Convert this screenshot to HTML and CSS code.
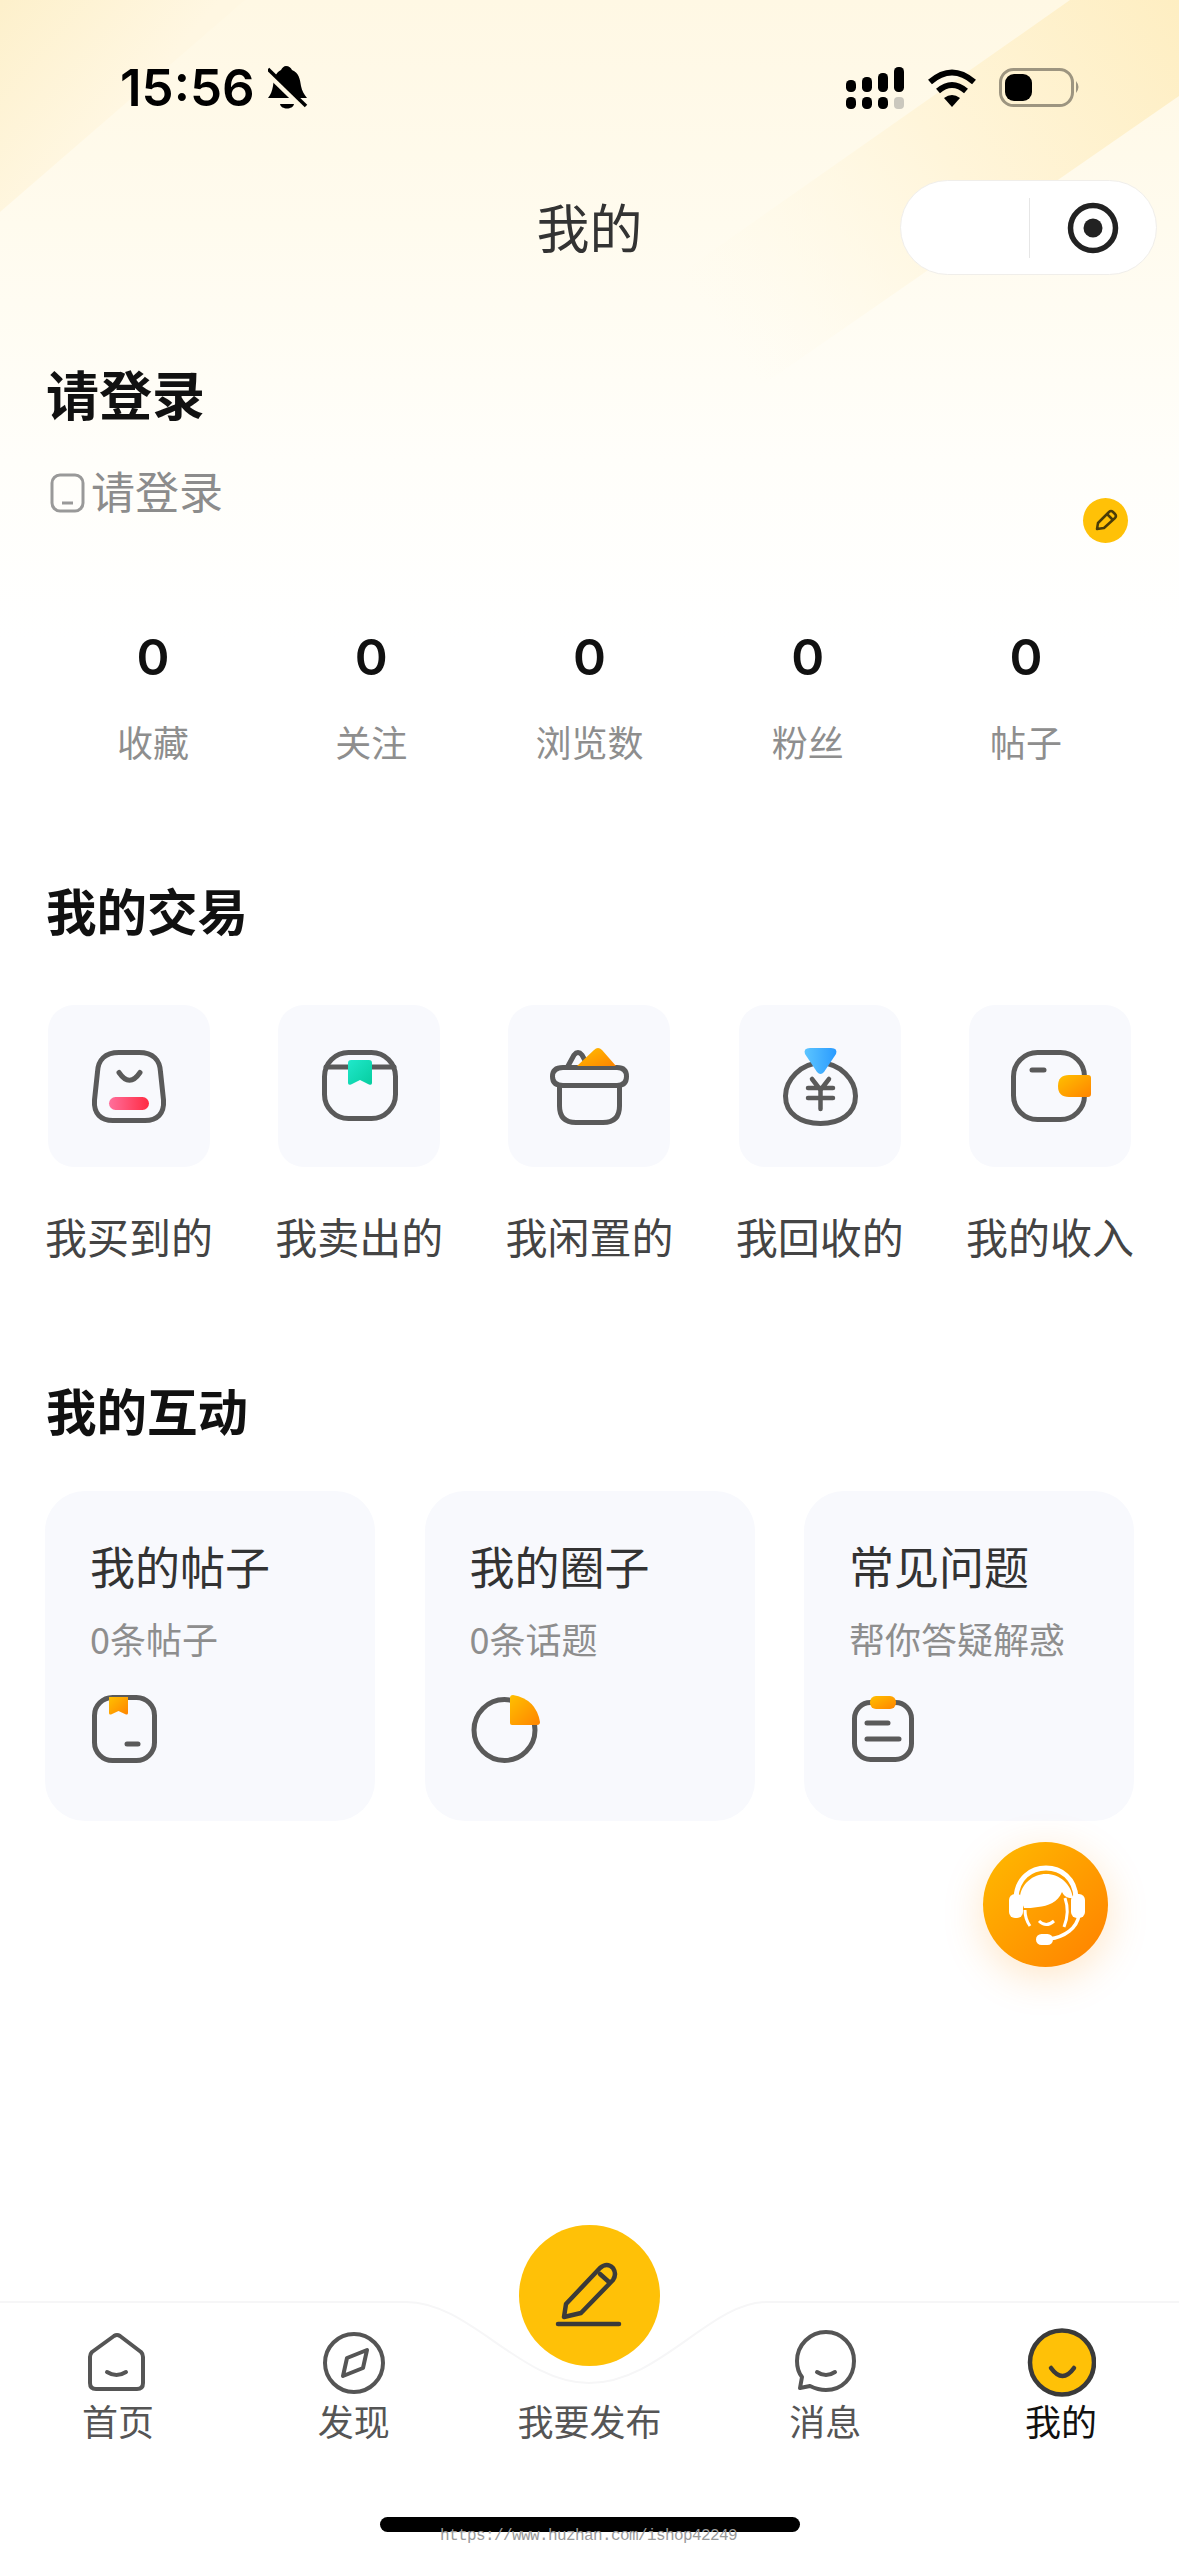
FILE: index.html
```html
<!DOCTYPE html>
<html lang="zh-CN">
<head>
<meta charset="UTF-8">
<meta name="viewport" content="width=device-width, initial-scale=1.0">
<title>我的</title>
<link rel="stylesheet" href="styles.css">
</head>
<body>

<!-- shared gradients for the icons -->
<svg class="defs" width="0" height="0">
  <defs>
    <linearGradient id="orange" x1="0" y1="0" x2="1" y2="1">
      <stop offset="0" stop-color="#ffc000"/>
      <stop offset="1" stop-color="#ff8400"/>
    </linearGradient>
    <linearGradient id="pink" x1="0" y1="0" x2="1" y2="0">
      <stop offset="0" stop-color="#ff6f9c"/>
      <stop offset="1" stop-color="#ff2b43"/>
    </linearGradient>
    <linearGradient id="teal" x1="0" y1="0" x2="1" y2="1">
      <stop offset="0" stop-color="#20e8cb"/>
      <stop offset="1" stop-color="#06cd9f"/>
    </linearGradient>
    <linearGradient id="blue" x1="0" y1="0" x2="1" y2="0">
      <stop offset="0" stop-color="#5cc5ff"/>
      <stop offset="1" stop-color="#2a9bff"/>
    </linearGradient>
    <linearGradient id="bgBase" x1="0" y1="0" x2="0" y2="1">
      <stop offset="0" stop-color="#fff8e4"/>
      <stop offset="0.35" stop-color="#fffbee"/>
      <stop offset="0.72" stop-color="#fffefa"/>
      <stop offset="1" stop-color="#ffffff"/>
    </linearGradient>
    <linearGradient id="bgLeft" gradientUnits="userSpaceOnUse" x1="0" y1="0" x2="125" y2="110">
      <stop offset="0" stop-color="#fdf0cb"/>
      <stop offset="1" stop-color="#fff7e2"/>
    </linearGradient>
    <linearGradient id="bgRight" gradientUnits="userSpaceOnUse" x1="1179" y1="0" x2="720" y2="330">
      <stop offset="0" stop-color="#feeec2"/>
      <stop offset="0.5" stop-color="#fff5da"/>
      <stop offset="1" stop-color="#fffaea" stop-opacity="0"/>
    </linearGradient>
  </defs>
</svg>

<div class="page">

  <svg class="page-bg" viewBox="0 0 1179 640" width="1179" height="640">
    <rect width="1179" height="640" fill="url(#bgBase)"/>
    <polygon points="0,0 245,0 0,212" fill="url(#bgLeft)"/>
    <polygon points="1070,0 1179,0 1179,96 640,470 400,470" fill="url(#bgRight)"/>
  </svg>

  <div class="status-bar">
    <div class="status-left">
      <span class="time">15:56</span>
      <svg width="40" height="44" viewBox="0 0 40 44">
        <path d="M18 0 C21 0 23 2 24 4 C31 7 32 13 33 20 C34 25 36 28 39 32 L0 32 C3 28 4 25 5 20 C6 13 7 7 13 4 C14 2 16 0 18 0Z" fill="#000"/>
        <path d="M12 38 H26 C25 44 13 44 12 38Z" fill="#000"/>
        <path d="M-1 7 L37 44" stroke="#fff8e4" stroke-width="5"/>
        <path d="M0 3 L38 40" stroke="#000" stroke-width="3.5"/>
      </svg>
    </div>
    <div class="status-right">
      <svg width="58" height="42" viewBox="0 0 58 42">
        <rect x="0" y="13" width="10" height="12" rx="4.5"/>
        <rect x="16" y="10" width="10" height="15" rx="4.5"/>
        <rect x="32" y="6" width="10" height="19" rx="4.5"/>
        <rect x="48" y="0" width="10" height="25" rx="4.5"/>
        <rect x="0" y="30" width="10" height="12" rx="4.5"/>
        <rect x="16" y="30" width="10" height="12" rx="4.5"/>
        <rect x="32" y="30" width="10" height="12" rx="4.5"/>
        <rect x="48" y="30" width="10" height="12" rx="4" fill="#cbc8be"/>
      </svg>
      <svg width="50" height="38" viewBox="0 0 50 38" fill="none" stroke="#000" stroke-width="6">
        <path d="M3 13 Q25 -6 47 13"/>
        <path d="M11 22 Q25 10 39 22"/>
        <path d="M17 29 Q25 23 33 29 L25 38Z" fill="#000" stroke="none"/>
      </svg>
      <svg width="82" height="40" viewBox="0 0 82 40">
        <rect x="1.5" y="1.5" width="72" height="36" rx="13" fill="none" stroke="#9d9580" stroke-width="3"/>
        <rect x="6" y="6" width="27" height="27" rx="9" fill="#000"/>
        <path d="M77 13 Q82 19 77 25Z" fill="#9d9580"/>
      </svg>
    </div>
  </div>

  <div class="nav">
    <span></span>
    <div class="nav-title">我的</div>
    <div class="capsule">
      <div class="capsule-left"></div>
      <div class="capsule-line"></div>
      <div class="capsule-right">
        <svg width="54" height="54" viewBox="0 0 54 54">
          <circle cx="27" cy="27" r="22.5" fill="none" stroke="#222" stroke-width="5.5"/>
          <circle cx="27" cy="27" r="9.5" fill="#222"/>
        </svg>
      </div>
    </div>
  </div>

  <div class="profile">
    <div>
      <div class="profile-name">请登录</div>
      <div class="profile-sub">
        <svg width="35" height="40" viewBox="0 0 35 40" fill="none" stroke="#999" stroke-width="3">
          <rect x="2" y="2" width="31" height="36" rx="8"/>
          <path d="M12 30 H23"/>
        </svg>
        <span>请登录</span>
      </div>
    </div>
    <div class="edit-badge">
      <svg width="45" height="45" viewBox="0 0 45 45" fill="none" stroke="#4a3c08" stroke-width="2.5" stroke-linejoin="round">
        <path d="M14 31 L15 25 L26 14 Q28 12 30 14 L32 16 Q34 18 32 20 L21 30 Z"/>
        <path d="M24 16 L30 22"/>
      </svg>
    </div>
  </div>

  <div class="stats">
    <div class="stat"><div class="stat-num">0</div><div class="stat-label">收藏</div></div>
    <div class="stat"><div class="stat-num">0</div><div class="stat-label">关注</div></div>
    <div class="stat"><div class="stat-num">0</div><div class="stat-label">浏览数</div></div>
    <div class="stat"><div class="stat-num">0</div><div class="stat-label">粉丝</div></div>
    <div class="stat"><div class="stat-num">0</div><div class="stat-label">帖子</div></div>
  </div>

  <h2 class="section-title trade-title">我的交易</h2>
  <div class="trade">
    <div class="trade-item">
      <div class="tile">
        <svg class="line-icon" width="80" height="80" viewBox="0 0 80 80">
          <path d="M30 6.5 H50 C64 6.5 71 14 71.5 26 L74.5 54 C75.5 68 68 74.5 56 74.5 H24 C12 74.5 4.5 68 5.5 54 L8.5 26 C9 14 16 6.5 30 6.5Z"/>
          <path d="M30 26.5 Q40.5 42 51 26.5"/>
          <rect x="20" y="51" width="40" height="13" rx="6.5" fill="url(#pink)" stroke="none"/>
        </svg>
      </div>
      <div class="trade-label">我买到的</div>
    </div>
    <div class="trade-item">
      <div class="tile">
        <svg class="line-icon" width="80" height="80" viewBox="0 0 80 80">
          <rect x="5.5" y="6.5" width="71" height="66" rx="24"/>
          <path d="M7 21 H75"/>
          <path d="M29 17 Q29 14 32 14 H50 Q53 14 53 17 V37 Q53 39.5 50 38.5 L41 34 L32 38.5 Q29 39.5 29 37Z" fill="url(#teal)" stroke="none"/>
        </svg>
      </div>
      <div class="trade-label">我卖出的</div>
    </div>
    <div class="trade-item">
      <div class="tile">
        <svg class="line-icon" width="80" height="80" viewBox="0 0 80 80">
          <path d="M19 20 L25 9 Q29 4 33 9 L38 18"/>
          <path d="M14 21.5 H68 Q77.5 21.5 77.5 30.5 Q77.5 39.5 68 39.5 H14 Q3.5 39.5 3.5 30.5 Q3.5 21.5 14 21.5Z"/>
          <path d="M10.5 40 V60 Q10.5 76.5 27 76.5 H54 Q70.5 76.5 70.5 60 V40"/>
          <path d="M28 20 L45 4 Q49 0 53 4 L67 20Z" fill="url(#orange)" stroke="none"/>
        </svg>
      </div>
      <div class="trade-label">我闲置的</div>
    </div>
    <div class="trade-item">
      <div class="tile">
        <svg class="line-icon" width="80" height="80" viewBox="0 0 80 80">
          <path d="M40.5 17 C60 17 75.500 34 75.500 50 C75.500 68 60 77.500 40.500 77.500 C21 77.500 5.500 68 5.500 50 C5.500 34 21 17 40.500 17Z"/>
          <path d="M32 33 L40.5 44 L49 33 M28 42 H53 M28 52 H53 M40.5 44 V63" stroke-width="4.5"/>
          <path d="M30 2 H51 Q58 2 56 8 L44 26 Q40.5 30 37 26 L25 8 Q23 2 30 2Z" fill="url(#blue)" stroke="none"/>
        </svg>
      </div>
      <div class="trade-label">我回收的</div>
    </div>
    <div class="trade-item">
      <div class="tile">
        <svg class="line-icon" width="80" height="80" viewBox="0 0 80 80">
          <rect x="3.5" y="6.5" width="71" height="67" rx="24"/>
          <path d="M22 24 H34"/>
          <path d="M59 29 H78 Q81 29 81 32 V48 Q81 51 78 51 H59 Q48 51 48 40 Q48 29 59 29Z" fill="url(#orange)" stroke="none"/>
        </svg>
      </div>
      <div class="trade-label">我的收入</div>
    </div>
  </div>

  <h2 class="section-title action-title">我的互动</h2>
  <div class="cards">
    <div class="card">
      <div class="card-title">我的帖子</div>
      <div class="card-sub">0条帖子</div>
      <svg class="line-icon card-icon" width="70" height="70" viewBox="0 0 70 70">
        <rect x="3.5" y="3.5" width="60" height="63" rx="18"/>
        <path d="M36 50 H47"/>
        <path d="M18 3 H37 V19 Q37 21 35 20.500 L27.500 17 L20 20.500 Q18 21 18 19Z" fill="url(#orange)" stroke="none"/>
      </svg>
    </div>
    <div class="card">
      <div class="card-title">我的圈子</div>
      <div class="card-sub">0条话题</div>
      <svg class="line-icon card-icon" width="70" height="70" viewBox="0 0 70 70">
        <circle cx="33.500" cy="36" r="30.500"/>
        <path d="M39 4 Q39 1 42 1 Q65 5 69 28 Q69 31 66 31 H41 Q39 31 39 29Z" fill="url(#orange)" stroke="none"/>
      </svg>
    </div>
    <div class="card">
      <div class="card-title">常见问题</div>
      <div class="card-sub">帮你答疑解惑</div>
      <svg class="line-icon card-icon" width="70" height="70" viewBox="0 0 70 70">
        <rect x="4.500" y="8.500" width="57" height="57" rx="16"/>
        <path d="M17 29 H38 M17 45 H49"/>
        <rect x="20" y="2" width="26" height="13" rx="6" fill="url(#orange)" stroke="none"/>
      </svg>
    </div>
  </div>

  <div class="service">
    <svg width="125" height="125" viewBox="0 0 125 125">
      <path d="M33 56 C34 36 48 26 63 26 C78 26 92 36 93 56" fill="none" stroke="#fff" stroke-width="5"/>
      <rect x="26" y="52" width="14" height="24" rx="6" fill="#fff"/>
      <rect x="88" y="52" width="14" height="24" rx="6" fill="#fff"/>
      <path d="M37 55 C38 42 50 32 63 32 C77 32 88 42 90 56 C86 56 82 56 79 50 C75 60 65 64 55 65 C50 66 45 66 41 66 Z" fill="#fff"/>
      <path d="M42 68 Q42 77 47 84 M82 56 Q87 70 81 85" fill="none" stroke="#fff" stroke-width="3"/>
      <path d="M56 79 Q63 86 71 79" fill="none" stroke="#fff" stroke-width="3"/>
      <path d="M96 73 C94 86 82 95 66 97" fill="none" stroke="#fff" stroke-width="3.500"/>
      <rect x="53" y="92" width="17" height="11" rx="5.500" fill="#fff"/>
    </svg>
  </div>

  <div class="tabbar">
    <svg class="tabbar-edge" width="1179" height="90" viewBox="0 0 1179 90">
      <path d="M0 1 H406 C470 1 520 82 589 82 C660 82 710 1 767 1 H1179" fill="none" stroke="#f6f6f7" stroke-width="2"/>
    </svg>
    <div class="publish">
      <svg width="141" height="141" viewBox="0 0 141 141" fill="none" stroke="#3a3a3a" stroke-width="4.500" stroke-linejoin="round" stroke-linecap="round">
        <path d="M45 92 L47 79 L81 43 Q88 37 94 43 Q98 49 94 55 L62 88 Z"/>
        <path d="M81 49 L90 57"/>
        <path d="M39 99 H100"/>
      </svg>
    </div>
    <div class="tabs">
      <div class="tab">
        <svg class="tab-icon" width="70" height="70" viewBox="0 0 70 70">
          <path d="M31 8 Q34 6 37 8 L58 24 Q60 26 60 29 V55 Q60 61 54 61 H13 Q7 61 7 55 V29 Q7 26 9 24 Z"/>
          <path d="M24 44 Q33.500 50 43 44"/>
        </svg>
        <div class="tab-label">首页</div>
      </div>
      <div class="tab">
        <svg class="tab-icon" width="70" height="70" viewBox="0 0 70 70">
          <circle cx="35" cy="35" r="29"/>
          <path d="M48 22 L44 40 L24 48 L28 30 Z"/>
        </svg>
        <div class="tab-label">发现</div>
      </div>
      <div class="tab">
        <div class="tab-spacer"></div>
        <div class="tab-label">我要发布</div>
      </div>
      <div class="tab">
        <svg class="tab-icon" width="70" height="70" viewBox="0 0 70 70">
          <path d="M36 4 C52 4 64 17 64 33 C64 50 52 62 36 62 C30 62 24 60 20 58 L10 60 L12 49 C8 44 7 38 7 33 C7 17 20 4 36 4Z"/>
          <path d="M27 44 Q36 50 45 44"/>
        </svg>
        <div class="tab-label">消息</div>
      </div>
      <div class="tab active">
        <svg class="tab-icon" width="70" height="70" viewBox="0 0 70 70">
          <ellipse cx="36" cy="34.500" rx="32" ry="32" fill="#ffc107"/>
          <path d="M25 40 Q36.500 56 48 40"/>
        </svg>
        <div class="tab-label">我的</div>
      </div>
    </div>
    <div class="home-bar"></div>
    <div class="watermark">https://www.huzhan.com/ishop42249</div>
  </div>

</div>

</body>
</html>
```

FILE: styles.css
```css
* {
  box-sizing: border-box;
}

body {
  margin: 0;
  background: #fff;
  font-family: "Noto Sans CJK SC", "Noto Sans", sans-serif;
  color: #333;
  overflow: hidden;
}

.defs {
  position: absolute;
}

.page {
  position: relative;
  isolation: isolate;
  width: 1179px;
  height: 2556px;
  display: flex;
  flex-direction: column;
  overflow: hidden;
}

.page-bg {
  position: absolute;
  top: 0;
  left: 0;
  z-index: -1;
}

/* status bar */
.status-bar {
  display: flex;
  justify-content: space-between;
  align-items: center;
  height: 48px;
  margin-top: 64px;
  padding: 0 98px 0 120px;
}

.status-left {
  display: flex;
  align-items: center;
  gap: 13px;
}

.time {
  font-family: Inter, sans-serif;
  font-size: 51px;
  font-weight: 600;
  line-height: 48px;
  color: #000;
}

.status-right {
  display: flex;
  align-items: center;
  gap: 22.5px;
}

/* nav */
.nav {
  display: grid;
  grid-template-columns: 1fr auto 1fr;
  align-items: center;
  height: 95px;
  margin-top: 68px;
}

.nav-title {
  padding-bottom: 4px;
  font-size: 53px;
  line-height: 70px;
  color: #333;
}

.capsule {
  justify-self: end;
  display: flex;
  align-items: center;
  width: 257px;
  height: 95px;
  margin-right: 22px;
  background: #fff;
  border: 1px solid #f0eeea;
  border-radius: 48px;
}

.capsule-left {
  width: 128px;
}

.capsule-line {
  width: 1px;
  height: 60px;
  background: #e6e6e6;
}

.capsule-right {
  flex: 1;
  display: flex;
  justify-content: center;
}

/* profile */
.profile {
  display: flex;
  justify-content: space-between;
  align-items: flex-end;
  padding: 83px 51px 0 46px;
}

.profile-name {
  font-size: 53px;
  font-weight: 700;
  line-height: 70px;
  color: #111;
}

.profile-sub {
  display: flex;
  align-items: center;
  gap: 6px;
  height: 60px;
  margin-top: 32px;
  padding-left: 4px;
  font-size: 44px;
  color: #8c8c8c;
}

.profile-sub svg {
  margin-top: 6px;
}

.edit-badge {
  width: 45px;
  height: 45px;
  margin-bottom: -23px;
  border-radius: 50%;
  background: #ffc107;
}

/* stats */
.stats {
  display: grid;
  grid-template-columns: repeat(5, 1fr);
  margin-top: 107px;
  padding: 0 44px;
}

.stat {
  text-align: center;
}

.stat-num {
  font-family: Inter, sans-serif;
  font-size: 50px;
  font-weight: 600;
  line-height: 60px;
  color: #111;
}

.stat-label {
  margin-top: 29px;
  font-size: 36px;
  line-height: 50px;
  color: #8e8e8e;
}

/* sections */
.section-title {
  margin: 0;
  padding-left: 46px;
  font-size: 50.5px;
  font-weight: 700;
  line-height: 60px;
  color: #111;
}

.trade-title {
  margin-top: 113px;
}

.action-title {
  margin-top: 118px;
}

.trade {
  display: grid;
  grid-template-columns: repeat(5, 1fr);
  margin-top: 66px;
  padding: 0 14px;
}

.trade-item {
  display: flex;
  flex-direction: column;
  align-items: center;
}

.tile {
  display: flex;
  align-items: center;
  justify-content: center;
  width: 162px;
  height: 162px;
  border-radius: 26px;
  background: #f8f9fd;
}

.trade-label {
  margin-top: 44px;
  font-size: 42px;
  line-height: 50px;
  color: #444;
  white-space: nowrap;
}

.line-icon {
  fill: none;
  stroke: #5a5a5a;
  stroke-width: 5;
  stroke-linecap: round;
  stroke-linejoin: round;
  overflow: visible;
}

.cards {
  display: grid;
  grid-template-columns: repeat(3, 330px);
  justify-content: space-between;
  margin-top: 52px;
  padding: 0 45px;
}

.card {
  height: 330px;
  padding: 45px 0 0 45px;
  border-radius: 40px;
  background: #f8f9fd;
}

.card-title {
  font-size: 45px;
  line-height: 60px;
  color: #333;
}

.card-sub {
  margin-top: 20px;
  font-size: 36px;
  line-height: 44px;
  color: #8e8e8e;
}

.card-icon {
  display: block;
  margin-top: 34px;
  margin-left: 1px;
}

/* floating customer service button */
.service {
  position: absolute;
  left: 983px;
  top: 1842px;
  width: 125px;
  height: 125px;
  border-radius: 50%;
  background: linear-gradient(135deg, #ffbb00, #ff8000);
  box-shadow: 0 10px 40px rgba(255, 140, 0, 0.22);
}

/* tab bar */
.tabbar {
  position: relative;
  margin-top: auto;
  height: 255px;
}

.tabbar-edge {
  position: absolute;
  top: 0;
  left: 0;
}

.publish {
  position: absolute;
  top: -76px;
  left: 519px;
  width: 141px;
  height: 141px;
  border-radius: 50%;
  background: #ffc107;
}

.tabs {
  position: relative;
  display: grid;
  grid-template-columns: repeat(5, 1fr);
  padding-top: 27px;
}

.tab {
  display: flex;
  flex-direction: column;
  align-items: center;
}

.tab-icon {
  display: block;
  fill: none;
  stroke: #555;
  stroke-width: 4;
  stroke-linecap: round;
  stroke-linejoin: round;
}

.tab-spacer {
  height: 70px;
}

.tab-label {
  font-size: 36px;
  line-height: 44px;
  color: #555;
}

.tab.active .tab-icon {
  stroke: #3a3a3a;
  stroke-width: 4.500;
}

.tab.active .tab-label {
  color: #111;
}

.home-bar {
  width: 420px;
  height: 15px;
  margin: 75px auto 0;
  border-radius: 8px;
  background: #000;
}

.watermark {
  position: absolute;
  left: 440px;
  top: 227px;
  font-family: "Liberation Mono", monospace;
  font-size: 16px;
  line-height: 16px;
  letter-spacing: -0.6px;
  color: #999;
  white-space: nowrap;
}
```
